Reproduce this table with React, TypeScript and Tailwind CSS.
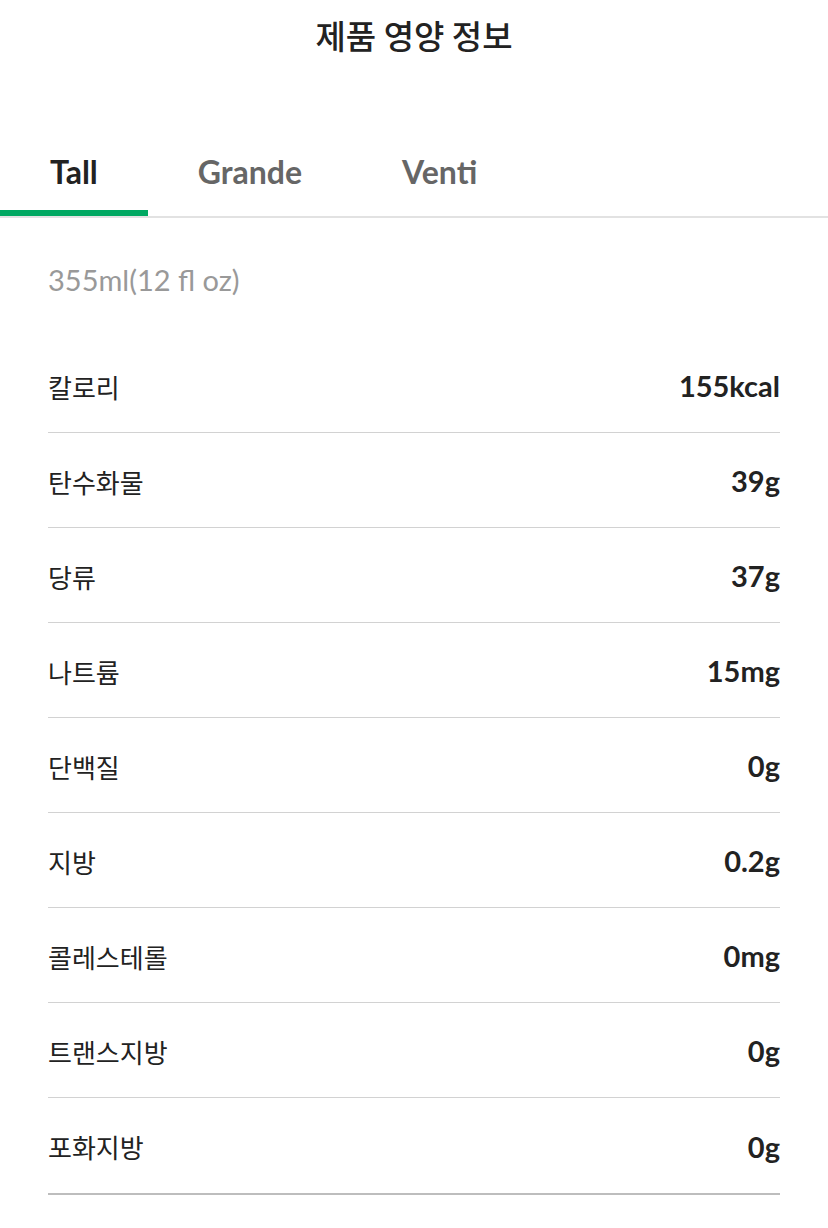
import { useState } from 'react';

const rows = [
  ['칼로리', '155kcal'],
  ['탄수화물', '39g'],
  ['당류', '37g'],
  ['나트륨', '15mg'],
  ['단백질', '0g'],
  ['지방', '0.2g'],
  ['콜레스테롤', '0mg'],
  ['트랜스지방', '0g'],
  ['포화지방', '0g'],
];

const tabs = ['Tall', 'Grande', 'Venti'];

export default function App() {
  const [active, setActive] = useState(0);

  return (
    <div className="min-h-screen bg-white text-[#222]" style={{ fontFamily: 'Lato, "Noto Sans CJK KR", sans-serif' }}>
      {/* TITLE */}
      <h1 className="text-center text-[33px] font-medium leading-[70px]" style={{ fontFamily: '"Noto Sans CJK KR", sans-serif' }}>
        제품 영양 정보
      </h1>

      {/* SIZE TABS */}
      <div className="mt-[64px] flex border-b-2 border-[#e2e2e2]">
        {tabs.map((t, i) => (
          <button
            key={t}
            onClick={() => setActive(i)}
            className={`h-[82px] px-[50px] border-b-[6px] text-[32px] font-bold leading-[76px] ${
              active === i ? 'border-[#00a862] text-[#222]' : 'border-transparent text-[#666]'
            }`}
          >
            {t}
          </button>
        ))}
      </div>

      <div className="px-[48px]">
        <p className="pt-[44px] pb-[40px] text-[29px] leading-[36px] text-[#999]">355ml(12 fl oz)</p>

        {rows.map(([label, value], i) => (
          <div
            key={label}
            className={`flex items-center justify-between pt-[2px] ${
              i === rows.length - 1 ? 'h-[97px] border-b-2 border-[#bdbdbd]' : 'h-[95px] border-b border-[#d2d2d2]'
            }`}
          >
            <span className="text-[26px]" style={{ fontFamily: '"Noto Sans CJK KR", sans-serif' }}>
              {label}
            </span>
            <span className="text-[29px] font-bold">{value}</span>
          </div>
        ))}
      </div>
    </div>
  );
}
